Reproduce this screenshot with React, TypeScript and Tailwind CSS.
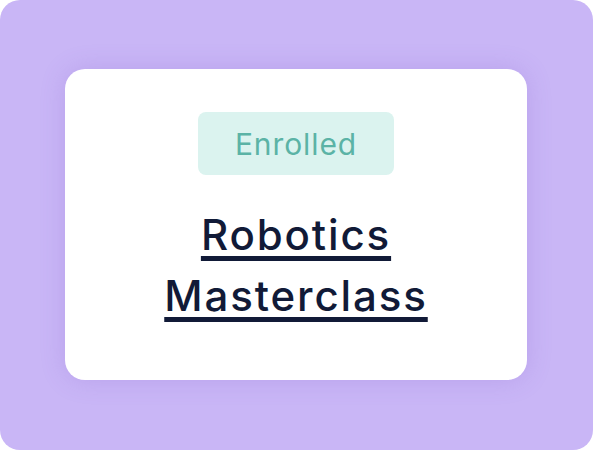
import React from 'react';

const App: React.FC = () => {
  return (
    <div className="w-[593px] h-[450px] bg-white">
      <div className="w-full h-full rounded-[20px] bg-[#c9b6f6] pt-[69px] pl-[65px]">
        <div
          className="w-[462px] h-[311px] bg-white rounded-[20px] shadow-[0_0_26px_rgba(120,80,200,0.2)] flex flex-col items-center pt-[43px]"
          style={{ fontFamily: 'Inter, "Noto Sans", sans-serif' }}
        >
          <span className="w-[196px] h-[63px] flex items-center justify-center rounded-[8px] bg-[#dbf3ef] text-[#5bb3a6] text-[30px] tracking-[0.03em] leading-none">
            Enrolled
          </span>
          <h1 className="mt-[29px] text-center text-[42px] leading-[61px] font-medium tracking-[0.045em] text-[#111a37] underline decoration-[5px] underline-offset-[6px]">
            Robotics
            <br />
            Masterclass
          </h1>
        </div>
      </div>
    </div>
  );
};

export default App;
